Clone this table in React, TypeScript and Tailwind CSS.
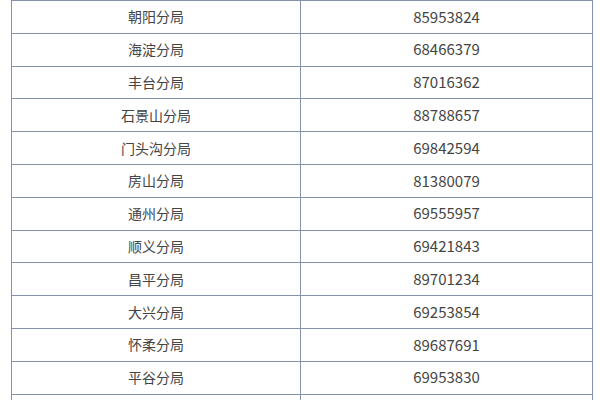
const rows: [string, string][] = [
  ["朝阳分局", "85953824"],
  ["海淀分局", "68466379"],
  ["丰台分局", "87016362"],
  ["石景山分局", "88788657"],
  ["门头沟分局", "69842594"],
  ["房山分局", "81380079"],
  ["通州分局", "69555957"],
  ["顺义分局", "69421843"],
  ["昌平分局", "89701234"],
  ["大兴分局", "69253854"],
  ["怀柔分局", "89687691"],
  ["平谷分局", "69953830"],
  ["", ""],
];

export default function App() {
  return (
    <div className="w-[600px] h-[400px] overflow-hidden bg-white pl-[11px]">
      <div
        className="w-[582px] border-l border-r border-t border-[#8293aa] text-[14px] text-[#444444]"
        style={{ fontFamily: '"Noto Sans CJK SC", "Noto Sans", sans-serif' }}
      >
        {rows.map(([name, phone], i) => (
          <div key={i} className="flex h-[32.8px] border-b border-[#8293aa]">
            <div className="w-[289px] flex items-center justify-center border-r border-[#8293aa]">
              {name}
            </div>
            <div className="flex-1 flex items-center justify-center text-[15px]">{phone}</div>
          </div>
        ))}
      </div>
    </div>
  );
}
